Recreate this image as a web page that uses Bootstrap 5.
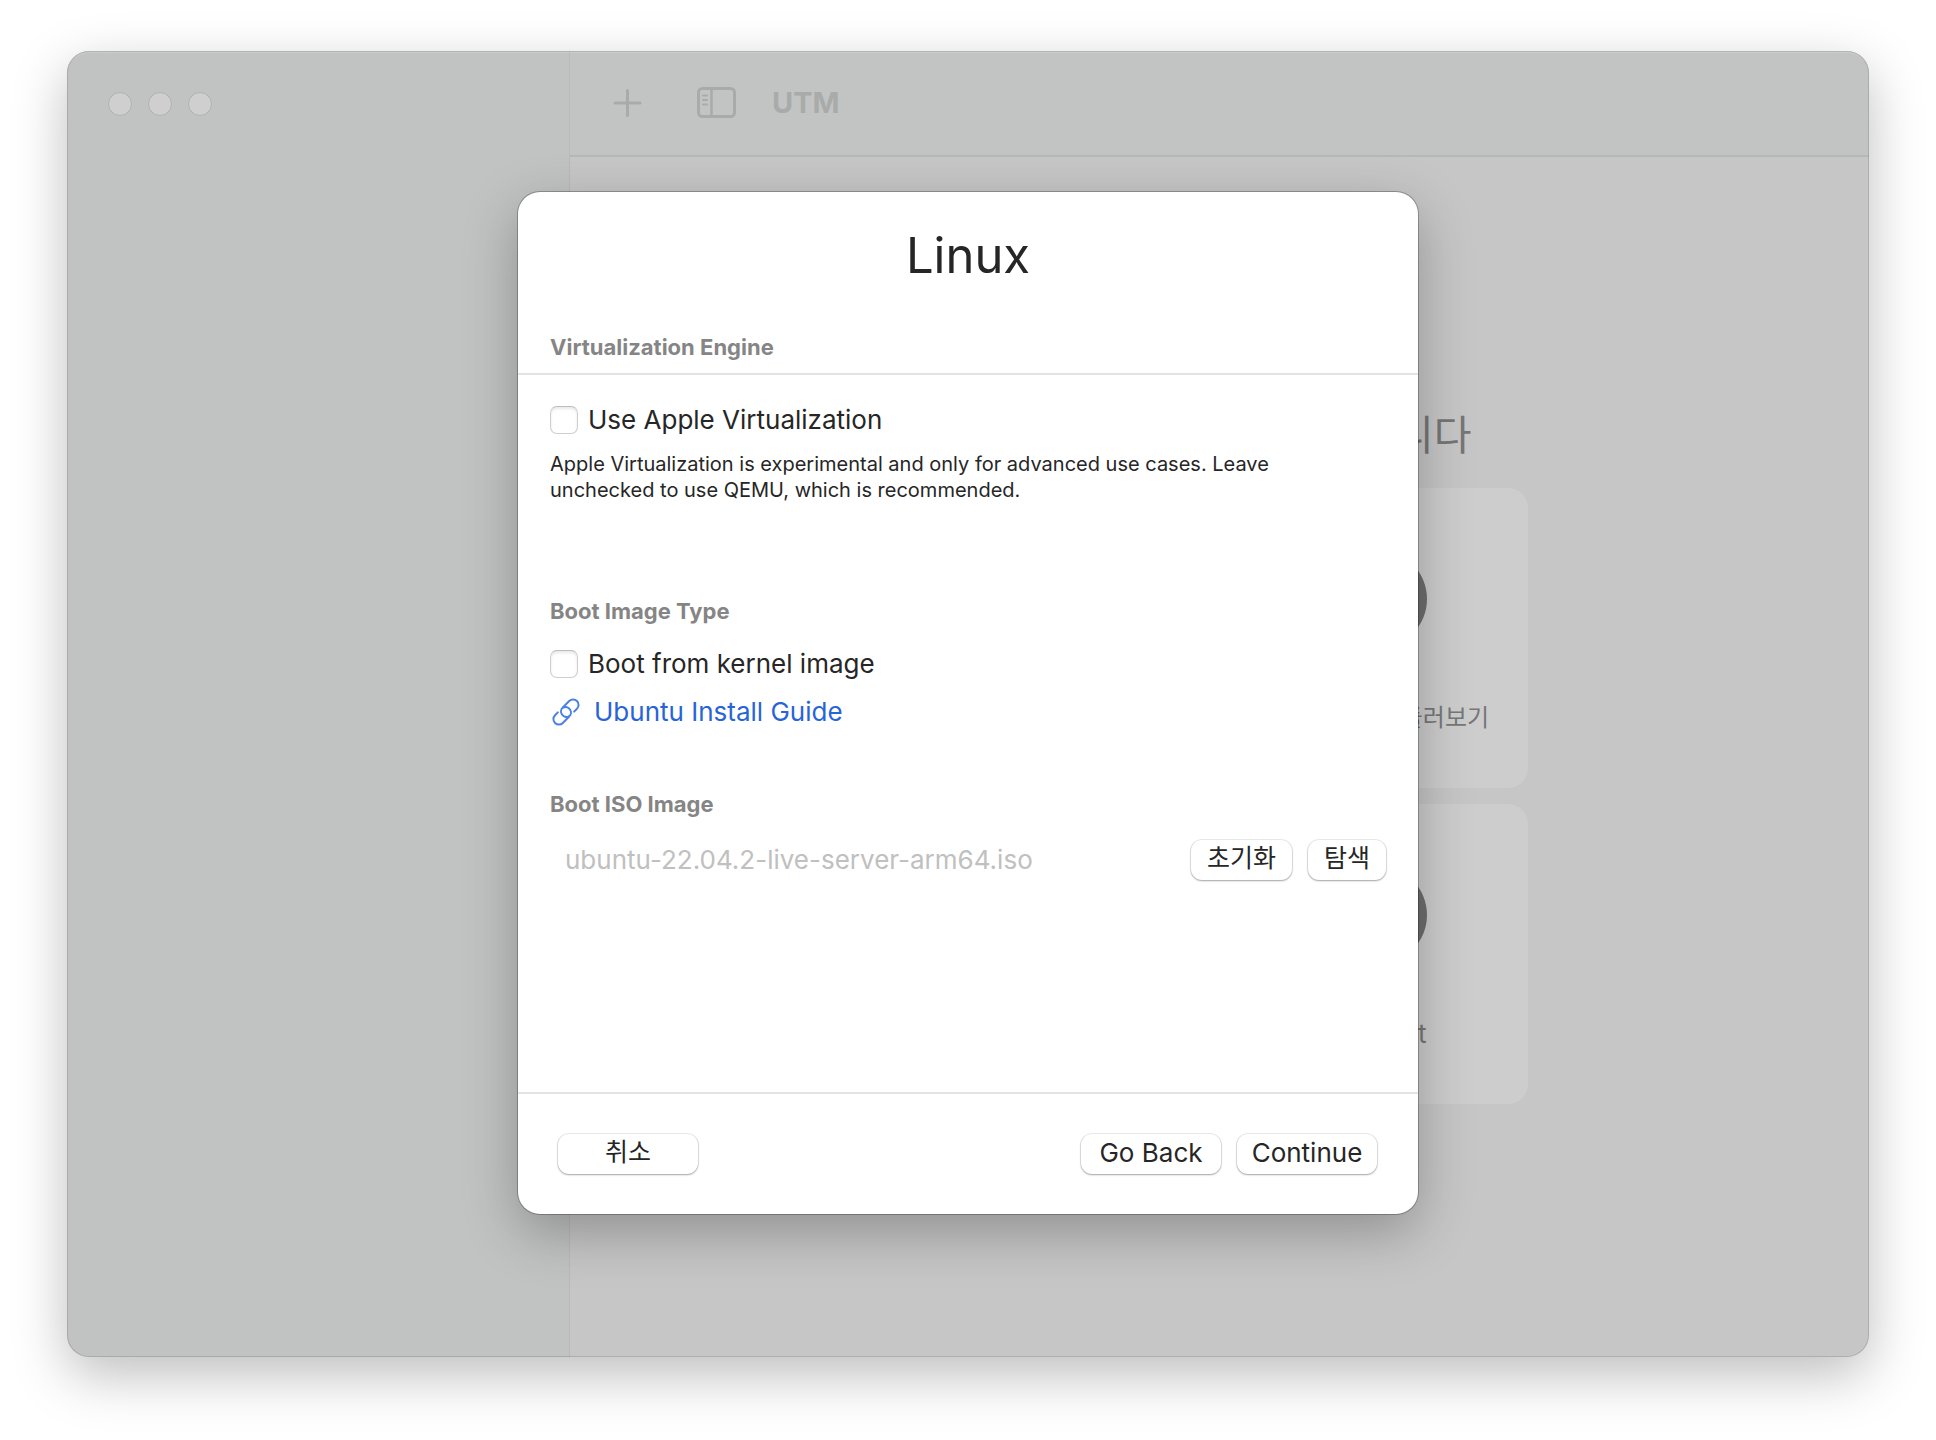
<!DOCTYPE html>
<html lang="ko">
<head>
<meta charset="utf-8">
<meta name="viewport" content="width=device-width, initial-scale=1">
<title>UTM</title>
<link rel="stylesheet" href="https://cdn.jsdelivr.net/npm/bootstrap@5.3.0/dist/css/bootstrap.min.css">
<style>
  body { font-family: Inter, "Noto Sans CJK KR", sans-serif; font-size: 26px; line-height: 28px; color: #262626; background: #fff; }
  .desktop { padding: 51px 67px 83px; }
  .app-window { background: #c6c6c6; border-radius: 22px; box-shadow: 0 18px 54px rgba(0,0,0,.26); }
  .app-window::after { content: ""; position: absolute; inset: 0; border-radius: 22px; box-shadow: inset 0 0 0 1px rgba(0,0,0,.12), inset 0 2px 0 rgba(255,255,255,.15); pointer-events: none; }
  .side-pane { flex: 0 0 503px; background: #c1c3c2; border-right: 1px solid #b8bab9; border-radius: 22px 0 0 22px; padding: 41px; }
  .light { width: 24px; height: 24px; padding: 0; border: 1px solid #b0b1b0; border-radius: 50%; background: #cecfce; }
  .toolbar-top { height: 106px; background: #c2c4c3; border-bottom: 2px solid #b6b8b7; border-radius: 0 22px 0 0; color: #a9abaa; padding: 0 41px 1px; }
  .tool { padding: 0; border: 0; background: none; color: inherit; }
  .tool svg { display: block; }
  .app-name { font-size: 29px; font-weight: 700; margin-left: 36px; }
  .welcome { font-size: 41px; line-height: 46px; font-weight: 400; color: #757575; margin-bottom: 30px; padding: 2px 56px 0 0; }
  .tiles { display: grid; grid-template-columns: 300px 300px; gap: 16px; }
  .tile { height: 300px; padding: 62px 0 0; border: 0; border-radius: 20px; background: #cdcdcd; color: #777; font-size: 24px; gap: 56px; }
  .tile-latin { font-size: 26px; }
  .sheet-layer { padding-top: 141px; z-index: 2; }
  .sheet { width: 900px; background: #fff; border-radius: 22px; box-shadow: 0 0 0 1px rgba(0,0,0,.26), 0 18px 54px rgba(0,0,0,.27); padding-top: 35px; }
  .sheet-title { font-size: 49px; line-height: 58px; font-weight: 400; margin: 0 0 49px; }
  .group-title { font-size: 22px; line-height: 26px; font-weight: 700; color: #858585; margin: 0; }
  .engine-head { padding: 0 32px 13px; border-bottom: 2px solid #e3e3e3; }
  .sheet-body { padding: 31px 32px 212px; }
  .tick { gap: 10px; min-height: 28px; }
  .tick .form-check-input { width: 28px; height: 28px; margin: 0; border: 1px solid #cfcfcf; border-top-color: #bdbdbd; border-radius: 7px; box-shadow: inset 0 2px 3px rgba(0,0,0,.09); }
  .hint { font-size: 20px; line-height: 26px; margin: 17px 0 95px; }
  .type-title { margin-bottom: 26px; }
  .guide { gap: 12px; color: #2864d8; margin: 20px 0 65px; }
  .iso-row { gap: 16px; margin-top: 23px; }
  .iso-name { border: 0; background: none; padding: 0 15px; min-width: 0; color: #c0c0c0; }
  .push { height: 40px; padding: 0 16px 2px; border: 0; border-radius: 11px; background: #fff; color: #262626; font-size: 26px; line-height: 38px; box-shadow: 0 0 0 1px rgba(0,0,0,.08), 0 1px 2px rgba(0,0,0,.3); }
  .push-ko { font-size: 25px; padding-bottom: 4px; line-height: 36px; }
  .sheet-foot { border-top: 2px solid #e3e3e3; padding: 40px 41px 40px 40px; }
  .foot-btn { min-width: 140px; padding-left: 0; padding-right: 0; }
</style>
<script src="https://cdn.jsdelivr.net/npm/bootstrap@5.3.0/dist/js/bootstrap.bundle.min.js"></script>
</head>
<body>
<div class="desktop min-vh-100 d-flex">
  <div class="app-window position-relative flex-grow-1 d-flex">
    <aside class="side-pane">
      <div class="d-flex gap-3">
        <button class="light" type="button" aria-label="Close"></button>
        <button class="light" type="button" aria-label="Minimize"></button>
        <button class="light" type="button" aria-label="Zoom"></button>
      </div>
    </aside>

    <main class="flex-grow-1 d-flex flex-column">
      <header class="toolbar-top d-flex align-items-center">
        <button class="tool" type="button" aria-label="New">
          <svg width="34" height="30" viewBox="0 0 34 30" fill="none" stroke="currentColor" stroke-width="3" stroke-linecap="round"><path d="M16.500 2.500v25M4 15h25"/></svg>
        </button>
        <button class="tool ms-5 ps-1" type="button" aria-label="Sidebar">
          <svg width="39" height="31" viewBox="0 0 39 31" fill="none" stroke="currentColor" stroke-linecap="round"><rect x="1.500" y="1.500" width="36" height="28" rx="4" stroke-width="3"/><path d="M14.500 2v27" stroke-width="2.500"/><path d="M6 8.500h4M6 13h4M6 17.500h4" stroke-width="2"/></svg>
        </button>
        <div class="app-name">UTM</div>
      </header>
      <section class="flex-grow-1 d-flex flex-column align-items-center justify-content-center">
        <div>
          <h2 class="welcome text-end">환영합니다</h2>
          <div class="tiles">
            <div class="tile"></div>
            <button class="tile d-flex flex-column align-items-center" type="button">
              <svg width="98" height="98" viewBox="0 0 98 98"><circle cx="49" cy="49" r="49" fill="#6e6e6e"/><path d="M76 22 56 56 22 76 42 42z" fill="#cdcdcd"/></svg>
              UTM 갤러리 둘러보기
            </button>
            <div class="tile"></div>
            <button class="tile tile-latin d-flex flex-column align-items-center" type="button">
              <svg width="98" height="98" viewBox="0 0 98 98"><circle cx="49" cy="49" r="49" fill="#6e6e6e"/><path d="M36 38a13 13 0 1 1 19 11q-6 4-6 10M49 70v2" fill="none" stroke="#cdcdcd" stroke-width="7" stroke-linecap="round"/></svg>
              Support
            </button>
          </div>
        </div>
      </section>
    </main>

    <div class="sheet-layer position-absolute top-0 start-0 w-100 d-flex justify-content-center">
      <form class="sheet" role="dialog" aria-labelledby="sheet-title" onsubmit="return false">
        <h1 class="sheet-title text-center" id="sheet-title">Linux</h1>
        <div class="engine-head"><h2 class="group-title">Virtualization Engine</h2></div>
        <div class="sheet-body">
          <div class="tick d-flex align-items-center">
            <input class="form-check-input" type="checkbox" id="apple-virt">
            <label for="apple-virt">Use Apple Virtualization</label>
          </div>
          <p class="hint">Apple Virtualization is experimental and only for advanced use cases. Leave<br>unchecked to use QEMU, which is recommended.</p>

          <h2 class="group-title type-title">Boot Image Type</h2>
          <div class="tick d-flex align-items-center">
            <input class="form-check-input" type="checkbox" id="kernel">
            <label for="kernel">Boot from kernel image</label>
          </div>
          <a class="guide d-flex align-items-center text-decoration-none" href="#guide">
            <svg width="32" height="28" viewBox="-16 -14 32 28" fill="none" stroke="#4c80e4" stroke-width="2" stroke-linecap="round">
              <g transform="rotate(-45)">
                <path d="M-6-5.500H-10A5.500 5.500 0 0 0-10 5.500H-1A5.500 5.500 0 0 0 1-5.200"/>
                <path d="M6 5.500H10A5.500 5.500 0 0 0 10-5.500H1A5.500 5.500 0 0 0-1 5.200"/>
              </g>
            </svg>
            Ubuntu Install Guide
          </a>

          <h2 class="group-title"><label for="iso">Boot ISO Image</label></h2>
          <div class="iso-row d-flex align-items-center">
            <input class="iso-name flex-grow-1" type="text" id="iso" value="ubuntu-22.04.2-live-server-arm64.iso" disabled>
            <button class="push push-ko" type="button">초기화</button>
            <button class="push push-ko" type="button">탐색</button>
          </div>
        </div>
        <div class="sheet-foot d-flex gap-3">
          <button class="push push-ko foot-btn me-auto" type="button">취소</button>
          <button class="push foot-btn" type="button">Go Back</button>
          <button class="push foot-btn" type="button">Continue</button>
        </div>
      </form>
    </div>
  </div>
</div>
</body>
</html>
